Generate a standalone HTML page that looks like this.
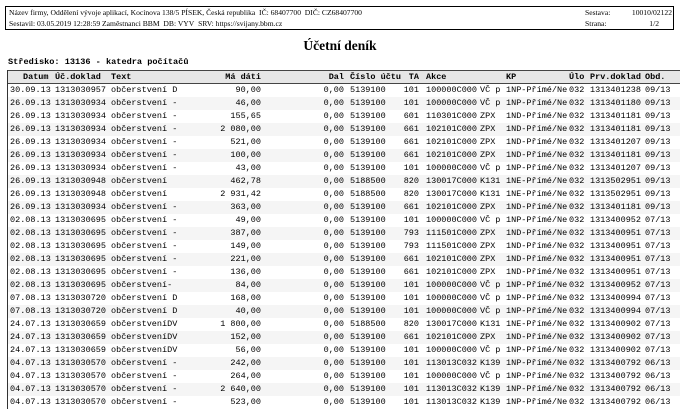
<!DOCTYPE html>
<html><head><meta charset="utf-8"><style>
*{margin:0;padding:0;box-sizing:border-box}
body{width:680px;height:409px;background:#fff;position:relative;overflow:hidden;font-family:"Liberation Mono",monospace;color:#000}
.hb{position:absolute;left:5px;top:6px;width:669px;height:24px;border:1px solid #000;font-family:"Liberation Serif",serif;font-size:7.6px}
.hb div{position:absolute;white-space:nowrap}
.title{position:absolute;left:0;width:680px;top:38px;text-align:center;font-family:"Liberation Serif",serif;font-weight:bold;font-size:13.5px}
.str{position:absolute;left:8px;top:57px;font-weight:bold;font-size:8.6px;white-space:nowrap}
.tbl{position:absolute;left:7px;top:70px;width:673px;height:339px;border-left:1px solid #333}
.r{position:absolute;left:0;width:673px;height:13px;font-size:8.5px;line-height:13px;white-space:pre}
.r span{position:absolute;top:0}
.h{top:0;height:14px;background:#e6e6e6;border-top:1px solid #444;border-bottom:1px solid #444;font-weight:bold;line-height:12px}
.g{background:#f5f5f5}
.a{left:2px}.b{left:47px}.c{left:103px}
.d{right:420px;text-align:right}.e{right:337px;text-align:right}
.f{left:342px}.t{right:262px;text-align:right}.k{left:418px}.v{left:472px}
.p{left:498px}.u{left:561px}.w{left:582px}.o{left:637px}
</style></head><body>
<div class="hb">
<div style="left:3px;top:1px">Název firmy, Oddělení vývoje aplikací, Kocínova 138/5 PÍSEK, Česká republika&nbsp; IČ: 68407700&nbsp; DIČ: CZ68407700</div>
<div style="left:3px;top:12px">Sestavil: 03.05.2019 12:28:59 Zaměstnanci BBM&nbsp; DB: VYV&nbsp; SRV: https://svijany.bbm.cz</div>
<div style="left:579px;top:1px">Sestava:</div><div style="right:1px;top:1px">10010/02122</div>
<div style="left:579px;top:12px">Strana:</div><div style="right:14px;top:12px">1/2</div>
</div>
<div class="title">Účetní deník</div>
<div class="str">Středisko: 13136 - katedra počítačů</div>
<div class="tbl">
<div class="r h"><span style="left:15px">Datum</span><span class="b">Úč.doklad</span><span class="c">Text</span><span class="d">Má dáti</span><span class="e">Dal</span><span class="f">Číslo účtu</span><span class="t">TA</span><span class="k">Akce</span><span class="p">KP</span><span class="u">Úlo</span><span class="w">Prv.doklad</span><span class="o">Obd.</span></div>
<div id="rows"></div>
</div>
<script>
var R=[
["30.09.13","1313030957","občerstvení D","90,00","5139100","101","100000C000","VČ p","1NP-Přímé/Ne","1313401238","09/13"],
["26.09.13","1313030934","občerstvení -","46,00","5139100","101","100000C000","VČ p","1NP-Přímé/Ne","1313401180","09/13"],
["26.09.13","1313030934","občerstvení -","155,65","5139100","601","110301C000","ZPX","1ND-Přímé/Ne","1313401181","09/13"],
["26.09.13","1313030934","občerstvení -","2 080,00","5139100","661","102101C000","ZPX","1ND-Přímé/Ne","1313401181","09/13"],
["26.09.13","1313030934","občerstvení -","521,00","5139100","661","102101C000","ZPX","1ND-Přímé/Ne","1313401207","09/13"],
["26.09.13","1313030934","občerstvení -","100,00","5139100","661","102101C000","ZPX","1ND-Přímé/Ne","1313401181","09/13"],
["26.09.13","1313030934","občerstvení -","43,00","5139100","101","100000C000","VČ p","1NP-Přímé/Ne","1313401207","09/13"],
["26.09.13","1313030948","občerstvení","462,78","5188500","820","130017C000","K131","1NE-Přímé/Ne","1313502951","09/13"],
["26.09.13","1313030948","občerstvení","2 931,42","5188500","820","130017C000","K131","1NE-Přímé/Ne","1313502951","09/13"],
["26.09.13","1313030934","občerstvení -","363,00","5139100","661","102101C000","ZPX","1ND-Přímé/Ne","1313401181","09/13"],
["02.08.13","1313030695","občerstvení -","49,00","5139100","101","100000C000","VČ p","1NP-Přímé/Ne","1313400952","07/13"],
["02.08.13","1313030695","občerstvení -","387,00","5139100","793","111501C000","ZPX","1ND-Přímé/Ne","1313400951","07/13"],
["02.08.13","1313030695","občerstvení -","149,00","5139100","793","111501C000","ZPX","1ND-Přímé/Ne","1313400951","07/13"],
["02.08.13","1313030695","občerstvení -","221,00","5139100","661","102101C000","ZPX","1ND-Přímé/Ne","1313400951","07/13"],
["02.08.13","1313030695","občerstvení -","136,00","5139100","661","102101C000","ZPX","1ND-Přímé/Ne","1313400951","07/13"],
["02.08.13","1313030695","občerstvení-","84,00","5139100","101","100000C000","VČ p","1NP-Přímé/Ne","1313400952","07/13"],
["07.08.13","1313030720","občerstvení D","168,00","5139100","101","100000C000","VČ p","1NP-Přímé/Ne","1313400994","07/13"],
["07.08.13","1313030720","občerstvení D","40,00","5139100","101","100000C000","VČ p","1NP-Přímé/Ne","1313400994","07/13"],
["24.07.13","1313030659","občerstveníDV","1 800,00","5188500","820","130017C000","K131","1NE-Přímé/Ne","1313400902","07/13"],
["24.07.13","1313030659","občerstveníDV","152,00","5139100","661","102101C000","ZPX","1ND-Přímé/Ne","1313400902","07/13"],
["24.07.13","1313030659","občerstveníDV","56,00","5139100","101","100000C000","VČ p","1NP-Přímé/Ne","1313400902","07/13"],
["04.07.13","1313030570","občerstvení -","242,00","5139100","101","113013C032","K139","1NP-Přímé/Ne","1313400792","06/13"],
["04.07.13","1313030570","občerstvení -","264,00","5139100","101","100000C000","VČ p","1NP-Přímé/Ne","1313400792","06/13"],
["04.07.13","1313030570","občerstvení -","2 640,00","5139100","101","113013C032","K139","1NP-Přímé/Ne","1313400792","06/13"],
["04.07.13","1313030570","občerstvení -","523,00","5139100","101","113013C032","K139","1NP-Přímé/Ne","1313400792","06/13"]];
var h="";
R.forEach(function(x,i){
h+='<div class="r'+(i%2?' g':'')+'" style="top:'+(14+i*13)+'px"><span class="a">'+x[0]+'</span><span class="b">'+x[1]+'</span><span class="c">'+x[2]+'</span><span class="d">'+x[3]+'</span><span class="e">0,00</span><span class="f">'+x[4]+'</span><span class="t">'+x[5]+'</span><span class="k">'+x[6]+'</span><span class="v">'+x[7]+'</span><span class="p">'+x[8]+'</span><span class="u">032</span><span class="w">'+x[9]+'</span><span class="o">'+x[10]+'</span></div>';
});
document.getElementById("rows").outerHTML=h;
</script>
</body></html>
